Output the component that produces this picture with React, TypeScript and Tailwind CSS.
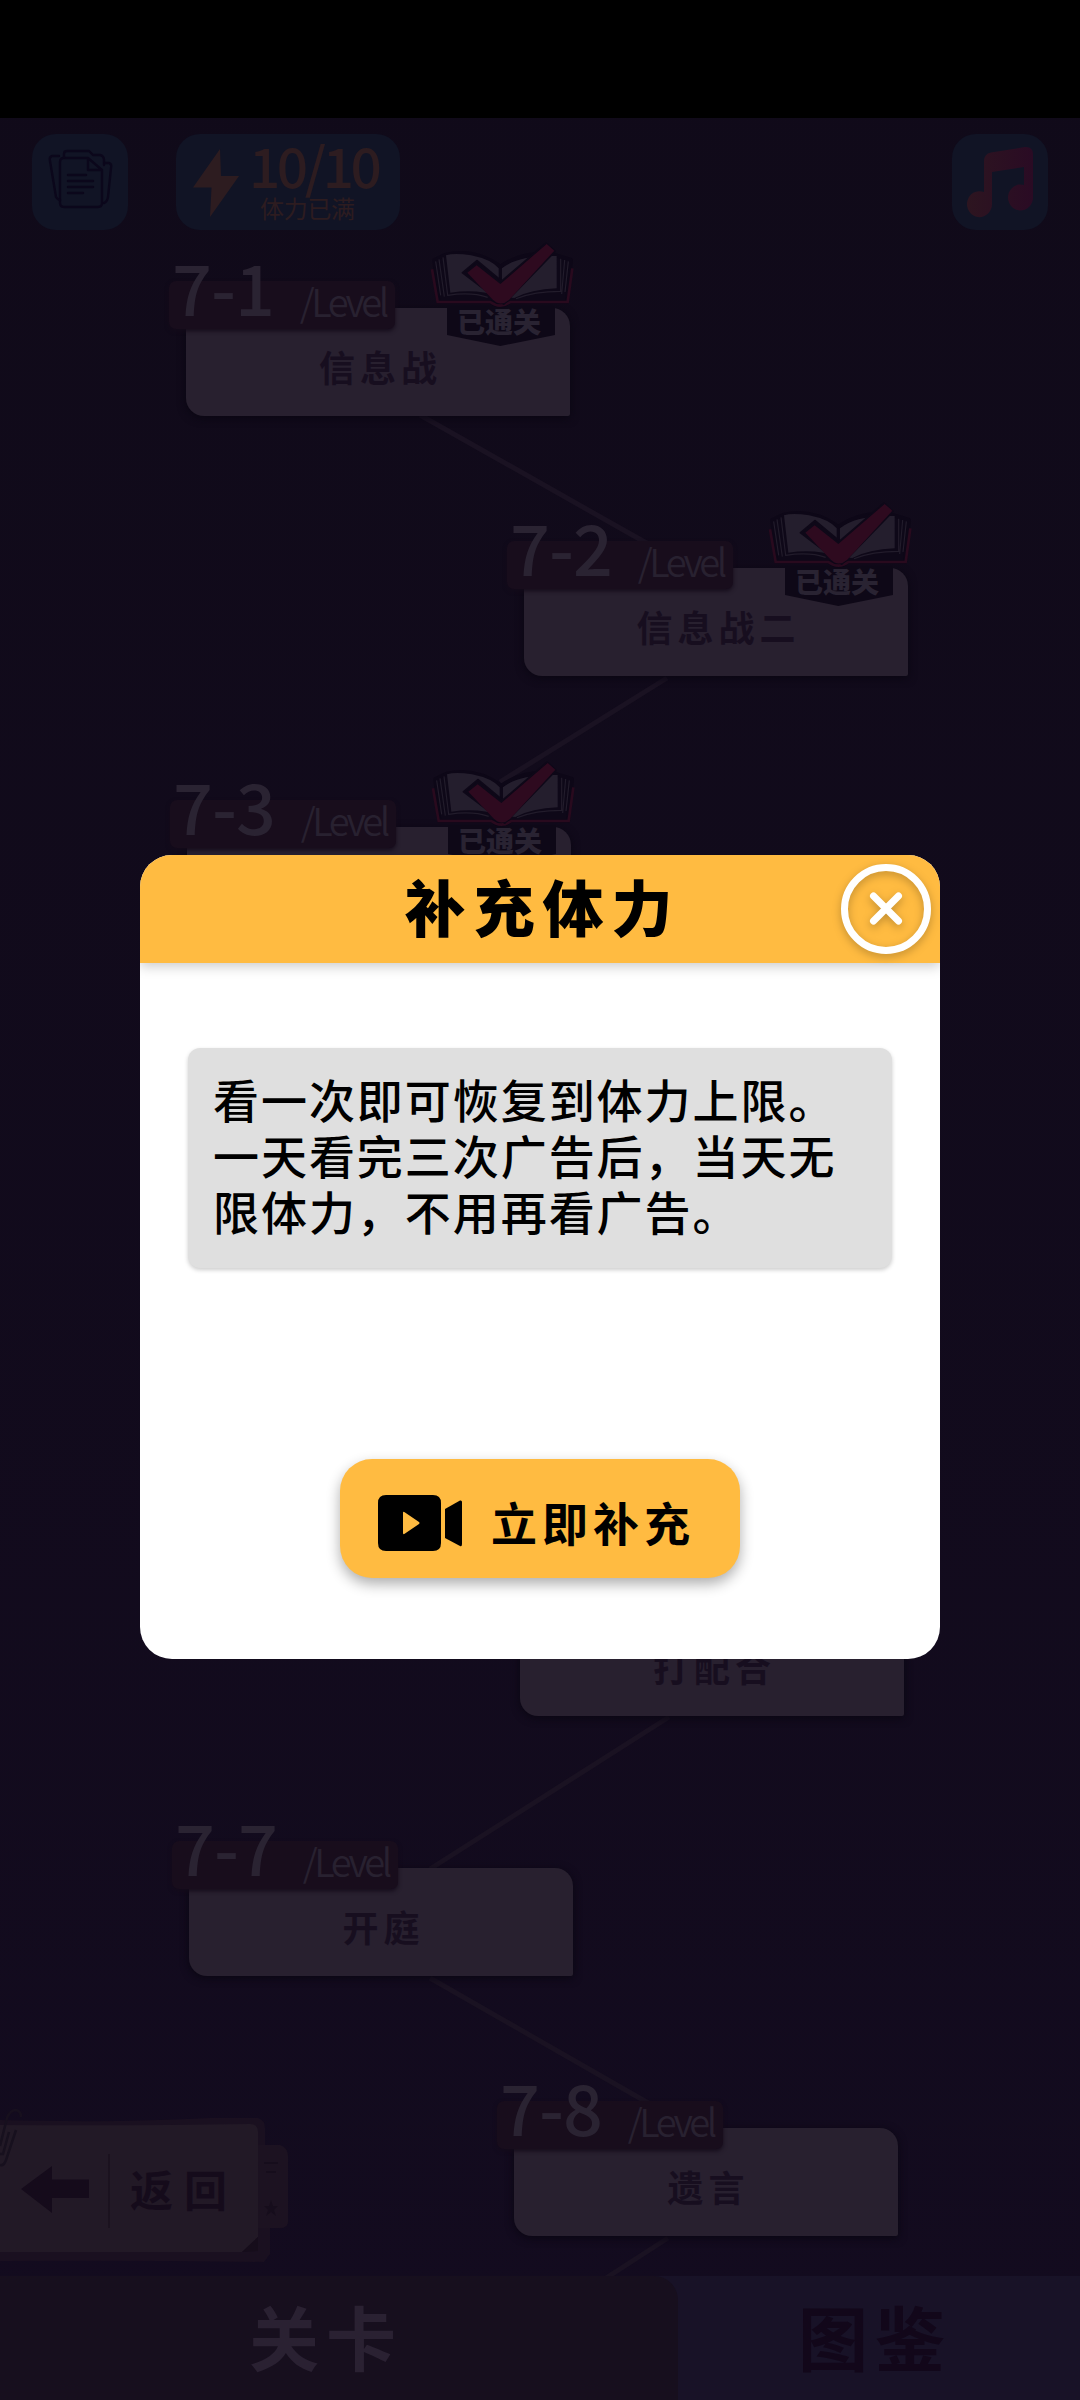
import clsx from 'clsx';

type Level = {
  id: string;
  name: string;
  place: string;
  cleared?: boolean;
};

const levels: Level[] = [
  { id: '7-1', name: '信息战', place: 'ml-[186px]', cleared: true },
  { id: '7-2', name: '信息战二', place: 'mt-[152px] ml-[524px]', cleared: true },
  { id: '7-3', name: '', place: 'mt-[151px] ml-[187px]', cleared: true },
  { id: '', name: '打配合', place: 'mt-[673px] ml-[520px]' },
  { id: '7-7', name: '开庭', place: 'mt-[152px] ml-[189px]' },
  { id: '7-8', name: '遗言', place: 'mt-[152px] ml-[514px]' },
];

function ClearedBadge() {
  return (
    <div className="absolute -top-[67px] left-[242px] h-[108px] w-[146px]">
      <svg viewBox="861 63 438 324" className="absolute inset-0 h-full w-full">
        <path d="M918 258H1242V345L1078 378L918 345Z" fill="#0e0817" />
        <path
          d="M880 120L892 246H1050Q1078 268 1105 246H1278L1290 120L1245 106Q1150 90 1078 140Q1000 84 915 104Z"
          fill="#0e0818"
          stroke="#0d0717"
          strokeWidth="12"
          strokeLinejoin="round"
        />
        <path
          d="M873 148L890 246H1048Q1078 268 1108 246H1280L1294 145"
          fill="none"
          stroke="#290a1e"
          strokeWidth="8"
        />
        <path d="M915 106Q940 98 990 106Q1050 118 1073 145V230Q1010 205 928 218Z" fill="#241e2d" />
        <path d="M1083 145Q1130 105 1247 108V205Q1170 208 1120 234L1083 230Z" fill="#241e2d" />
        <path
          d="M906 112L920 226Q990 215 1040 232M894 118L910 230M884 124L899 226M1259 116V214Q1180 214 1125 236M1271 120L1262 222M1282 124L1272 216"
          fill="none"
          stroke="#221c2b"
          strokeWidth="3.500"
        />
        <path
          d="M965 158L1008 122L1082 184L1215 70L1242 94L1088 252Z"
          fill="#0e0818"
          stroke="#0e0818"
          strokeWidth="6"
          strokeLinejoin="round"
        />
        <path d="M979 158L1007 136L1078 192L1217 72L1240 92L1104 240Q1078 262 1054 238Z" fill="#2e0a1f" />
      </svg>
      <span className="absolute top-[66px] left-[25px] w-[92px] text-center text-[28px] leading-[28px] font-black text-[#292332]">
        已通关
      </span>
    </div>
  );
}

function LevelCard({ level }: { level: Level }) {
  return (
    <div className={clsx('relative h-[108px] w-[384px] shrink-0', level.place)}>
      <div className="flex h-full items-center justify-center rounded-tr-[18px] rounded-bl-[18px] rounded-br-[2px] bg-[#28202f] pt-[8px] shadow-[0_2px_8px_#0a0612]">
        <span className="pl-[5px] text-[36px] leading-[44px] font-bold tracking-[5px] text-[#170e1f]">
          {level.name}
        </span>
      </div>
      {level.id && (
        <div className="absolute -top-[27px] -left-[17px] flex h-[48px] w-[226px] items-end justify-between rounded-[7px] bg-[#180d1c] pr-[9px] pl-[3px] shadow-[0_2px_4px_#140b1a]">
          <span className="mb-[8px] text-[70px] leading-[70px] font-medium tracking-[-1px] text-[#2a2332]">
            {level.id}
          </span>
          <span className="mb-[9px] text-[38px] leading-[38px] font-[350] tracking-[-3.400px] text-[#282130]">
            /Level
          </span>
        </div>
      )}
      {level.cleared && <ClearedBadge />}
    </div>
  );
}

function Header() {
  return (
    <header className="flex h-[112px] shrink-0 items-start px-8 pt-4">
      <button className="size-24 rounded-[24px] bg-[#111425]">
        <svg
          viewBox="0 0 96 96"
          className="size-24"
          fill="none"
          stroke="#0b071b"
          strokeWidth="2.4"
          strokeLinecap="round"
          strokeLinejoin="round"
        >
          <path d="M56 24H32Q28 24 28 28V69Q28 73 32 73H66Q70 73 70 69V36ZM56 24V36H70" />
          <path d="M32 23V20Q32 17 35 17H57L61 21H68Q72 22 72 26V31" />
          <path d="M27 22H20Q17 23 18 27L24 63Q25 65 28 66" />
          <path d="M73 29H77Q80 30 79 34L76 63Q75 68 72 69" />
          <path d="M36 41H54M36 47H61M36 53H61M36 59H51" />
        </svg>
      </button>
      <button className="ml-12 flex h-24 w-[224px] items-start rounded-[24px] bg-[#111425] pl-[17px]">
        <svg viewBox="0 0 46 68" className="mt-[15px] h-[68px] w-[46px]" fill="#2d1c20">
          <path d="M27 0L0 38.500H18.500L17 68L46 27H28Z" />
        </svg>
        <span className="ml-[10px] flex flex-col items-start text-[#2d1c20]">
          <span className="mt-[2px] text-[55px] leading-[56px] font-medium tracking-[-3.500px]">
            10/10
          </span>
          <span className="mt-[4px] ml-[11px] text-[24px] leading-[24px] tracking-[-0.300px]">体力已满</span>
        </span>
      </button>
      <button className="ml-auto size-24 rounded-[24px] bg-[#111425]">
        <svg viewBox="0 0 96 96" className="size-24" fill="url(#note)">
          <defs>
            <linearGradient id="note">
              <stop offset="0" stopColor="#2d1520" />
              <stop offset="1" stopColor="#2a0b24" />
            </linearGradient>
          </defs>
          <path d="M32 58V27Q32 20 39 18.500L73 13Q81 12.500 81 20V63A12.500 13 0 1 1 72 51V33L40 38V70A12.500 13 0 1 1 32 58Z" />
        </svg>
      </button>
    </header>
  );
}

function BackButton() {
  return (
    <button className="absolute bottom-[14px] left-0 h-[144px] w-[290px]">
      <svg viewBox="0 0 290 150" className="absolute top-0 left-0 h-[150px] w-[290px] overflow-visible">
        <path
          d="M0 2Q120 5 210 0H258Q265 2 265 10V28H280Q288 30 288 38V104Q287 110 280 110H270V136L264 144Q120 142 0 143Z"
          fill="#1a1020"
        />
        <path d="M258 27H280Q288 30 288 38V104Q287 110 280 110H258Z" fill="#1c1221" />
        <path d="M264 45H278M266 54H276" stroke="#160d1c" strokeWidth="2" />
        <path d="M271 82L273 88H278L274 92L276 98L271 94L266 98L268 92L264 88H269Z" fill="#160d1c" />
        <path d="M0 7Q130 8 250 6Q258 6 258 14V119L242 134H0Z" fill="#221926" />
        <path d="M258 119L242 134L258 133Z" fill="#160d1b" />
        <path d="M21 71L52 48V61.500H89V80H52V95Z" fill="#150b1b" />
        <path d="M109 36V110" stroke="#1b121f" strokeWidth="2" />
        <path
          d="M0 28L7 0Q10 -8 16 -8Q21 -7 21 -1M16 12L6 42Q4 48 0 47M9 14L3 36H0"
          fill="none"
          stroke="#17101e"
          strokeWidth="2.500"
        />
      </svg>
      <span className="absolute top-[46px] left-[130px] text-[43px] leading-[48px] font-bold tracking-[11px] whitespace-nowrap text-[#150b1b]">
        返回
      </span>
    </button>
  );
}

function Dialog() {
  return (
    <div className="absolute inset-0 flex items-start justify-center pt-[855px]">
      <section className="flex h-[804px] w-[800px] flex-col items-center overflow-hidden rounded-[32px] bg-white">
        <div className="relative flex h-[108px] w-full shrink-0 items-center justify-center bg-[#ffbb41] pb-[7px] shadow-[0_3px_12px_rgba(0,0,0,0.22)]">
          <h2 className="pl-[5px] text-[61px] leading-[62px] font-black tracking-[8px] text-black">
            补充体力
          </h2>
          <button className="absolute top-[9px] right-[9px] flex size-[90px] items-center justify-center">
            <svg
              viewBox="0 0 90 90"
              className="size-[90px] overflow-visible drop-shadow-[0_3px_4px_rgba(0,0,0,0.25)]"
              fill="none"
              stroke="white"
              strokeWidth="7"
              strokeLinecap="round"
            >
              <circle cx="45" cy="45" r="41.500" />
              <path d="M32.500 32L57.500 57M57.500 32L32.500 57" />
            </svg>
          </button>
        </div>
        <div className="mt-[85px] h-[220px] w-[704px] rounded-[12px] bg-[#dfdfdf] pt-[22px] pl-[25px] shadow-[0_2px_4px_rgba(0,0,0,0.2)]">
          <p className="text-[46px] leading-[56px] font-medium tracking-[1.950px] whitespace-nowrap text-black">
            看一次即可恢复到体力上限。
            <br />
            一天看完三次广告后，当天无
            <br />
            限体力，不用再看广告。
          </p>
        </div>
        <button className="mt-[191px] flex h-[119px] w-[400px] items-center rounded-[32px] bg-[#ffbb41] pl-[38px] shadow-[0_6px_14px_rgba(0,0,0,0.32)]">
          <svg viewBox="0 0 84 56" className="mt-[8px] h-[56px] w-[84px]">
            <path
              d="M8 0H55Q63 0 63 8V48Q63 56 55 56H8Q0 56 0 48V8Q0 0 8 0ZM25 18V38Q25 40 27 38.500L41 29Q42 28 41 27L27 17.500Q25 16 25 18Z"
              fillRule="evenodd"
            />
            <path d="M67 14L82 5.500Q84 5 84 7V49Q84 52 82 51L67 43Z" />
          </svg>
          <span className="ml-[29px] pt-[4px] text-[46px] leading-[50px] font-bold tracking-[5px] whitespace-nowrap text-black">
            立即补充
          </span>
        </button>
      </section>
    </div>
  );
}

export default function App() {
  return (
    <div className="relative flex h-[2400px] w-[1080px] flex-col overflow-hidden bg-gradient-to-b from-[#100a19] to-[#130b1f] font-['Noto_Sans_CJK_SC',sans-serif]">
      <div className="h-[118px] shrink-0 bg-black" />
      <Header />
      <main className="relative flex flex-1 flex-col overflow-hidden pt-[78px]">
        {/* routes between the levels */}
        <svg
          viewBox="0 230 1080 2046"
          className="absolute inset-0 h-[2046px] w-[1080px]"
          fill="none"
          stroke="#1a1222"
          strokeWidth="5"
        >
          <path d="M420 415L650 545M667 678L500 782M669 1717L430 1869M430 1978L650 2104M668 2238L606 2278" />
        </svg>
        {levels.map((level) => (
          <LevelCard key={level.name + level.id} level={level} />
        ))}
        <BackButton />
      </main>
      <nav className="flex h-[124px] shrink-0 bg-[#181227] pb-[4px] text-[70px] leading-[70px] font-bold tracking-[7px]">
        <button className="-mb-[4px] w-[678px] rounded-tr-[24px] bg-[#170f1e] pr-[26px] pb-[4px] text-[#2a2132]">
          关卡
        </button>
        <button className="flex-1 pr-[8px] text-[#12071a]">图鉴</button>
      </nav>
      <Dialog />
    </div>
  );
}
